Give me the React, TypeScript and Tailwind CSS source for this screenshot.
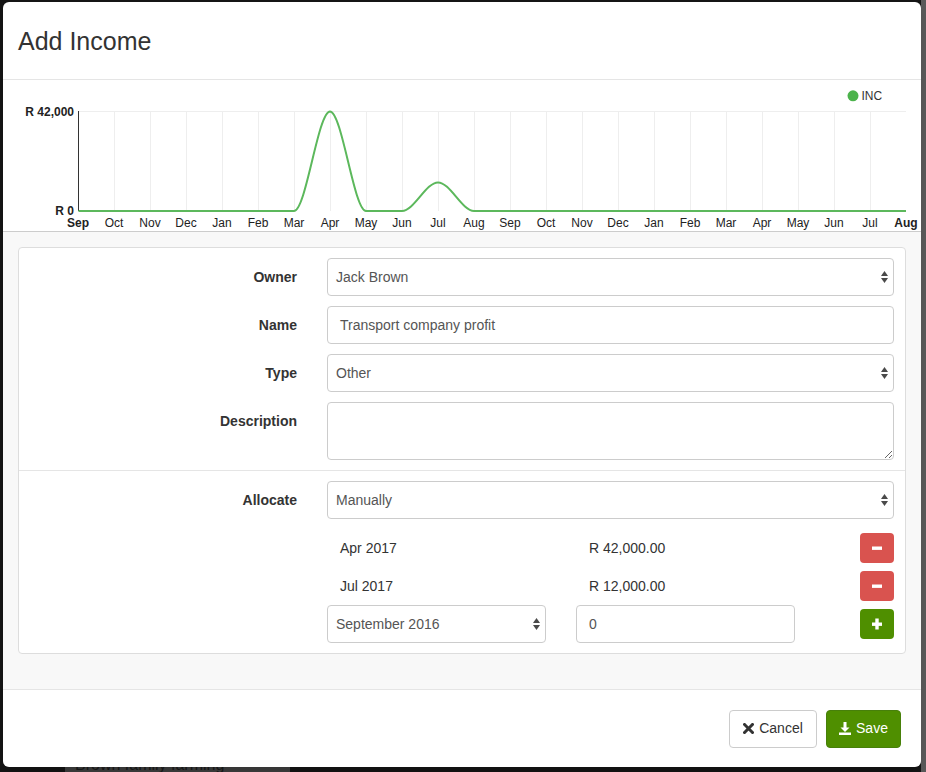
const font = { fontFamily: '"Liberation Sans", Arial, sans-serif' };

const MONTHS = ['Sep', 'Oct', 'Nov', 'Dec', 'Jan', 'Feb', 'Mar', 'Apr', 'May', 'Jun', 'Jul', 'Aug',
  'Sep', 'Oct', 'Nov', 'Dec', 'Jan', 'Feb', 'Mar', 'Apr', 'May', 'Jun', 'Jul', 'Aug'];

const Arrows = () => (
  <svg width="7" height="12" viewBox="0 0 7 12" className="shrink-0">
    <polygon points="0,5 3.5,0 7,5" fill="#4a4a4a" />
    <polygon points="0,7 7,7 3.5,12" fill="#4a4a4a" />
  </svg>
);

const Select = ({ value, className = '' }: { value: string, className?: string }) => (
  <div className={`h-[38px] flex items-center justify-between border border-[#ccc] rounded-[4px] bg-white pl-[8px] pr-[5px] text-[14px] text-[#555] ${className}`}>
    <span>{value}</span>
    <Arrows />
  </div>
);

const Chart = () => {
  const path = 'M78.5,211 H294 C306,211 318,111.5 330,111.5 C342,111.5 354,211 366,211 H402 C414,211 426,182.4 438,182.4 C450,182.4 462,211 474,211 H906';
  return (
    <svg width="918" height="151" viewBox="3 80 918 151" className="block">
      <line x1="78.5" y1="111.5" x2="906" y2="111.5" stroke="#eeeeee" />
      {Array.from({ length: 22 }).map((_, i) => (
        <line key={i} x1={114.5 + 36 * i} y1="111.5" x2={114.5 + 36 * i} y2="211" stroke="#eeeeee" />
      ))}
      <line x1="78.5" y1="111" x2="78.5" y2="211" stroke="#333" />
      <path d={path} fill="none" stroke="#5cb85c" strokeWidth="2" />
      <text x="74" y="115.5" textAnchor="end" fontSize="12" fontWeight="bold" fill="#222">R 42,000</text>
      <text x="74" y="215" textAnchor="end" fontSize="12" fontWeight="bold" fill="#222">R 0</text>
      {MONTHS.map((m, i) => (
        <text key={i} x={78 + 36 * i} y="227" textAnchor="middle" fontSize="12"
          fontWeight={i === 0 || i === 23 ? 'bold' : 'normal'} fill="#222">{m}</text>
      ))}
      <circle cx="853" cy="95.8" r="5.5" fill="#4cb34c" />
      <text x="861.5" y="100" fontSize="12" fill="#333">INC</text>
    </svg>
  );
};

const Label = ({ children }: { children: React.ReactNode }) => (
  <div className="w-[278px] shrink-0 text-right pt-[9px] text-[14px] leading-[20px] font-bold text-[#333]">{children}</div>
);

const IconBtn = ({ color, plus }: { color: string, plus?: boolean }) => (
  <div className={`w-[34px] h-[30px] rounded-[4px] flex items-center justify-center ${color}`}>
    <svg width="12" height="12" viewBox="0 0 12 12">
      <rect x="1" y="4.5" width="10" height="3.4" fill="#fff" />
      {plus && <rect x="4.3" y="0.5" width="3.4" height="11" fill="#fff" />}
    </svg>
  </div>
);

const App = () => {
  return (
    <div className="relative w-[926px] h-[772px] overflow-hidden flex bg-[#151515]" style={font}>
      <div className="flex-1 flex flex-col justify-end">
        <div className="ml-[65px] w-[225px] h-[16px] bg-[#3e3e3e] pl-[10px] text-[16px] leading-[18px] text-[#1a1a1a] overflow-hidden">Brown family farming</div>
      </div>
      <div className="w-[5px] bg-[#5a5a5a]" />

      {/* modal */}
      <div className="absolute left-[3px] top-[2px] w-[918px] h-[765px] bg-white rounded-[6px] flex flex-col overflow-hidden shadow-lg">
        <div className="h-[78px] shrink-0 border-b border-[#e5e5e5] px-[15px] flex items-center">
          <h4 className="text-[25px] text-[#333] leading-none pt-[2px]">Add Income</h4>
        </div>
        <div className="h-[152px] shrink-0 border-b border-[#cccccc]">
          <Chart />
        </div>

        <div className="flex-1 bg-[#f8f8f8] px-[15px] pt-[15px]">
          <div className="bg-white border border-[#ddd] rounded-[4px]">
            <div className="pt-[10px] pb-[10px] pr-[11px] flex flex-col gap-[10px] border-b border-[#e5e5e5]">
              <div className="flex gap-[30px]">
                <Label>Owner</Label>
                <Select value="Jack Brown" className="flex-1" />
              </div>
              <div className="flex gap-[30px]">
                <Label>Name</Label>
                <div className="flex-1 h-[38px] flex items-center border border-[#ccc] rounded-[4px] px-[12px] text-[14px] text-[#555]">Transport company profit</div>
              </div>
              <div className="flex gap-[30px]">
                <Label>Type</Label>
                <Select value="Other" className="flex-1" />
              </div>
              <div className="flex gap-[30px]">
                <Label>Description</Label>
                <textarea className="flex-1 h-[58px] border border-[#ccc] rounded-[4px] px-[12px] py-[6px] text-[14px] text-[#555] bg-white outline-none" />
              </div>
            </div>

            <div className="pt-[10px] pb-[10px] pr-[11px] flex flex-col">
              <div className="flex gap-[30px]">
                <Label>Allocate</Label>
                <Select value="Manually" className="flex-1" />
              </div>
              <div className="flex flex-col ml-[308px] mt-[10px] text-[14px] text-[#333]">
                <div className="h-[38px] flex items-center">
                  <div className="w-[219px] pl-[13px]">Apr 2017</div>
                  <div className="w-[219px] ml-[30px] pl-[13px]">R 42,000.00</div>
                  <div className="flex-1 flex justify-end"><IconBtn color="bg-[#d9534f]" /></div>
                </div>
                <div className="h-[38px] flex items-center">
                  <div className="w-[219px] pl-[13px]">Jul 2017</div>
                  <div className="w-[219px] ml-[30px] pl-[13px]">R 12,000.00</div>
                  <div className="flex-1 flex justify-end"><IconBtn color="bg-[#d9534f]" /></div>
                </div>
                <div className="h-[38px] flex items-center">
                  <Select value="September 2016" className="w-[219px]" />
                  <div className="w-[219px] ml-[30px] h-[38px] flex items-center border border-[#ccc] rounded-[4px] px-[12px] text-[#555]">0</div>
                  <div className="flex-1 flex justify-end"><IconBtn color="bg-[#4f8f00]" plus /></div>
                </div>
              </div>
            </div>
          </div>
        </div>

        <div className="h-[78px] shrink-0 border-t border-[#e5e5e5] flex items-center justify-end gap-[9px] pr-[20px] text-[14px]">
          <div className="h-[38px] w-[88px] border border-[#ccc] rounded-[4px] bg-white text-[#333] flex items-center justify-center gap-[5px]">
            <svg width="11" height="11" viewBox="0 0 11 11">
              <path d="M1.5 1.5 L9.5 9.5 M9.5 1.5 L1.5 9.5" stroke="#333" strokeWidth="3" strokeLinecap="square" />
            </svg>
            <span>Cancel</span>
          </div>
          <div className="h-[38px] w-[75px] rounded-[4px] bg-[#4f8f00] border border-[#47800a] text-white flex items-center justify-center gap-[5px]">
            <svg width="12" height="13" viewBox="0 0 12 13">
              <rect x="4.5" y="0" width="3" height="6" fill="#fff" />
              <polygon points="1.5,5.5 10.5,5.5 6,10" fill="#fff" />
              <rect x="0" y="10.5" width="12" height="2.5" fill="#fff" />
            </svg>
            <span>Save</span>
          </div>
        </div>
      </div>
    </div>
  );
};

export default App;
